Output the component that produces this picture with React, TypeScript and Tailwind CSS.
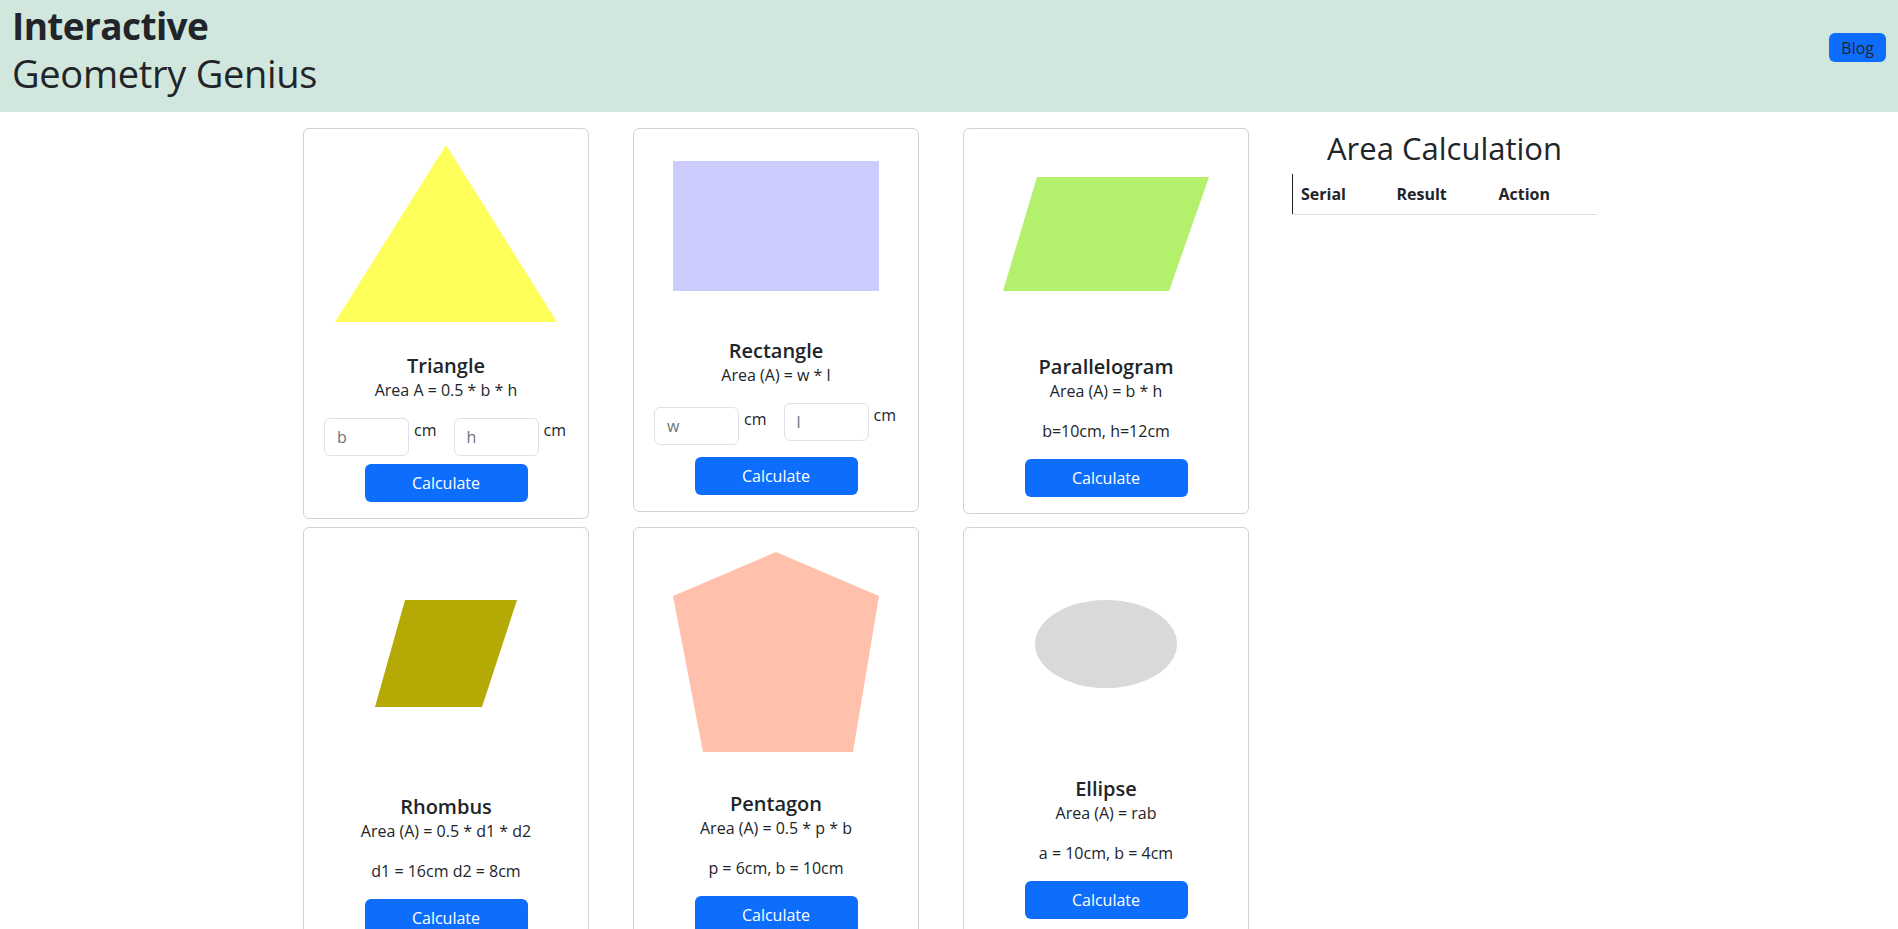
import type { ReactNode } from 'react';

type CardProps = {
  imageClass: string;
  shape: ReactNode;
  title: string;
  formula: string;
  note?: string;
  children?: ReactNode;
};

function ShapeCard({ imageClass, shape, title, formula, note, children }: CardProps) {
  return (
    <div className="rounded-md border border-[#d2d2d2] bg-white">
      <div className={`flex justify-center ${imageClass}`}>{shape}</div>
      <div className="p-4 text-center">
        <h5 className="text-[20px] font-semibold leading-6">{title}</h5>
        <p className="mb-4 leading-6">{formula}</p>
        {note && <p className="mb-4 leading-6">{note}</p>}
        {children}
      </div>
    </div>
  );
}

function CalcButton({ className = '' }: { className?: string }) {
  return (
    <button className={`mx-auto block h-[38px] w-[163px] rounded-md bg-[#0d6efd] text-base leading-6 text-white ${className}`}>
      Calculate
    </button>
  );
}

function UnitInput({ placeholder, className = '' }: { placeholder: string; className?: string }) {
  return (
    <div className={`flex items-start gap-[5px] ${className}`}>
      <input
        placeholder={placeholder}
        className="h-[38px] w-[85px] rounded-md border border-[#dee2e6] bg-white px-3 text-base text-[#212529] outline-none placeholder:text-[#6c757d]"
      />
      <span className="leading-6">cm</span>
    </div>
  );
}

export default function App() {
  return (
    <div className="h-[929px] overflow-hidden bg-white font-['Open_Sans',sans-serif] text-[#212529]">
      <header className="flex h-[112px] justify-between bg-[#d1e7dd] px-3">
        <div>
          <h1 className="pt-[3px] text-[37px] font-bold leading-[46px] tracking-[-0.6px]">Interactive</h1>
          <p className="text-[38px] font-medium leading-[48px] tracking-[-0.3px]">Geometry Genius</p>
        </div>
        <button className="mt-[33px] h-[29px] rounded-md bg-[#0d6efd] px-3 text-base leading-6 text-[#212529]">
          Blog
        </button>
      </header>

      <main className="mx-auto mt-4 flex w-[1320px] px-3">
        <div className="grid w-[990px] shrink-0 grid-cols-[286px_286px_286px] items-start gap-x-[44px] gap-y-2 pl-[2px]">
          <ShapeCard
            imageClass="py-4"
            title="Triangle"
            formula="Area A = 0.5 * b * h"
            shape={
              <svg width="222" height="177" viewBox="0 0 222 177">
                <polygon points="111,0 222,177 0,177" fill="#ffff5c" />
              </svg>
            }
          >
            <div className="mb-2 flex justify-center gap-[17px] pr-[2px]">
              <UnitInput placeholder="b" />
              <UnitInput placeholder="h" />
            </div>
            <CalcButton />
          </ShapeCard>

          <ShapeCard
            imageClass="py-8"
            title="Rectangle"
            formula="Area (A) = w * l"
            shape={<div className="h-[130px] w-[206px] bg-[#ccccff]" />}
          >
            <div className="flex justify-center gap-[17px] pr-[2px]">
              <UnitInput placeholder="w" className="mt-1" />
              <UnitInput placeholder="l" />
            </div>
            <CalcButton className="mt-3" />
          </ShapeCard>

          <ShapeCard
            imageClass="py-12"
            title="Parallelogram"
            formula="Area (A) = b * h"
            note="b=10cm, h=12cm"
            shape={
              <svg width="206" height="114" viewBox="0 0 206 114">
                <polygon points="34,0 206,0 166,114 0,114" fill="#b3f06b" />
              </svg>
            }
          >
            <CalcButton />
          </ShapeCard>

          <ShapeCard
            imageClass="py-[72px]"
            title="Rhombus"
            formula="Area (A) = 0.5 * d1 * d2"
            note="d1 = 16cm d2 = 8cm"
            shape={
              <svg width="142" height="107" viewBox="0 0 142 107">
                <polygon points="30,0 142,0 107,107 0,107" fill="#b5aa05" />
              </svg>
            }
          >
            <CalcButton />
          </ShapeCard>

          <ShapeCard
            imageClass="py-6"
            title="Pentagon"
            formula="Area (A) = 0.5 * p * b"
            note="p = 6cm, b = 10cm"
            shape={
              <svg width="206" height="200" viewBox="0 0 206 200">
                <polygon points="103,0 206,44 180,200 30,200 0,44" fill="#ffc1ab" />
              </svg>
            }
          >
            <CalcButton />
          </ShapeCard>

          <ShapeCard
            imageClass="pt-[72px] pb-[73px]"
            title="Ellipse"
            formula="Area (A) = rab"
            note="a = 10cm, b = 4cm"
            shape={<div className="h-[88px] w-[142px] rounded-[50%] bg-[#d9d9d9]" />}
          >
            <CalcButton />
          </ShapeCard>
        </div>

        <section className="flex-1 pl-px">
          <h2 className="mb-[7px] pt-px text-center text-[31px] font-medium leading-[38px]">Area Calculation</h2>
          <table className="w-full border-l border-[#212529]">
            <thead>
              <tr>
                <th className="w-[96px] border-b border-[#dee2e6] px-2 py-2 text-left font-bold leading-6">Serial</th>
                <th className="w-[102px] border-b border-[#dee2e6] px-2 py-2 text-left font-bold leading-6">Result</th>
                <th className="border-b border-[#dee2e6] px-2 py-2 text-left font-bold leading-6">Action</th>
              </tr>
            </thead>
            <tbody />
          </table>
        </section>
      </main>
    </div>
  );
}
